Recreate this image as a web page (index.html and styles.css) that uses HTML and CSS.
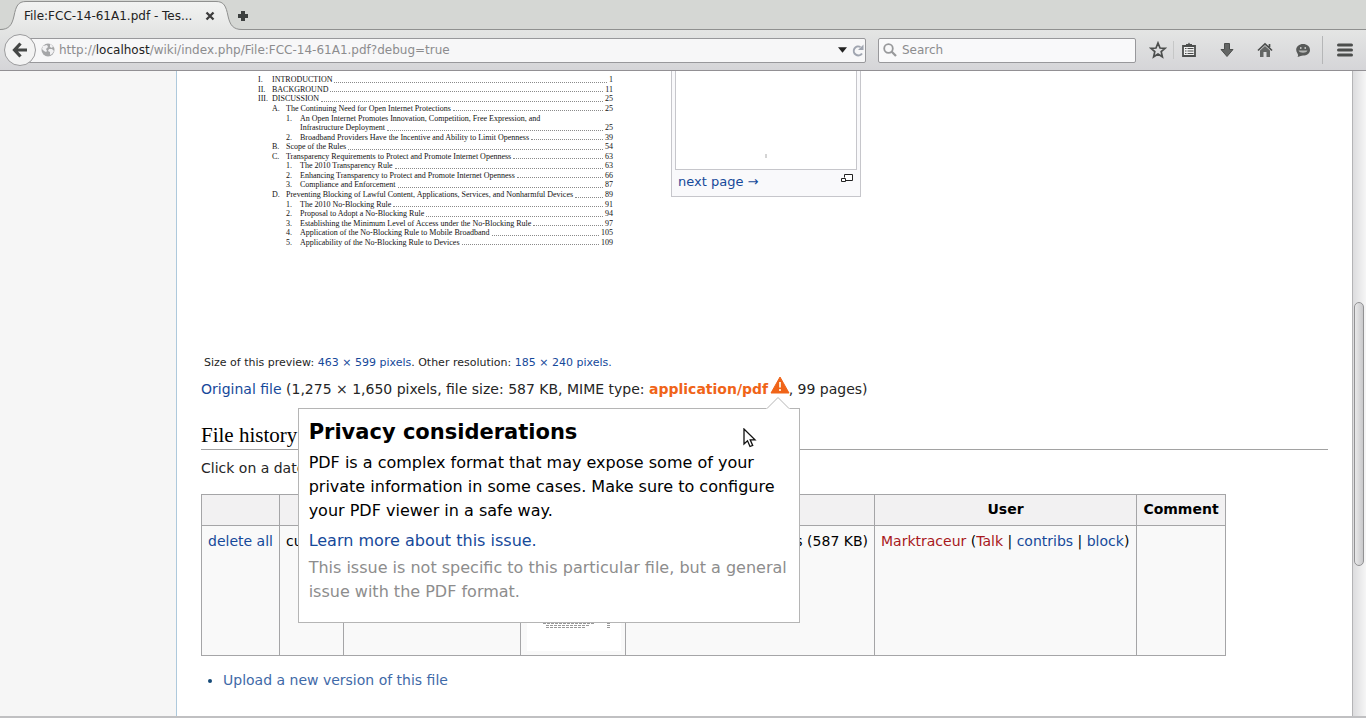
FILE: index.html
```html
<!DOCTYPE html>
<html lang="en">
<head>
<meta charset="utf-8">
<title>File:FCC-14-61A1.pdf</title>
<link rel="stylesheet" href="styles.css">
</head>
<body>
<div class="browser">
  <div class="tabstrip">
    <div class="tab">
      <svg class="tab-shape" viewBox="0 0 242 30" width="242" height="30" aria-hidden="true">
        <defs><linearGradient id="tabfill" x1="0" y1="0" x2="0" y2="1"><stop offset="0" stop-color="#f2f3f2"/><stop offset="1" stop-color="#e5e6e5"/></linearGradient></defs>
        <path d="M0 30V29.500C9 29.500 12 25 14 16C16 6 18 1.500 26 1.500H216C224 1.500 226 6 228 16C230 25 233 29.500 242 29.500V30Z" fill="url(#tabfill)"/>
        <path d="M0 29.500C9 29.500 12 25 14 16C16 6 18 1.500 26 1.500H216C224 1.500 226 6 228 16C230 25 233 29.500 242 29.500" fill="none" stroke="#8f908f"/>
      </svg>
      <span class="tab-title">File:FCC-14-61A1.pdf - Tes...</span>
      <button class="icon-btn tab-close" aria-label="Close tab"><svg width="10" height="10" viewBox="0 0 10 10"><path d="M1.500 1.500L8.500 8.500M8.500 1.500L1.500 8.500" stroke="#3c3c3c" stroke-width="2.300"/></svg></button>
    </div>
    <button class="icon-btn new-tab" aria-label="New tab"><svg width="12" height="12" viewBox="0 0 12 12"><path d="M4 1H8V4H11V8H8V11H4V8H1V4H4Z" fill="#3d403f"/></svg></button>
  </div>
  <div class="toolbar">
    <button class="back" aria-label="Back"><svg width="16" height="16" viewBox="0 0 16 16"><path d="M8.500 1.500L2.500 8L8.500 14.500M3 8H15" fill="none" stroke="#454746" stroke-width="3.200"/></svg></button>
    <div class="urlbar">
      <svg width="14" height="14" viewBox="0 0 14 14"><circle cx="7" cy="7" r="6.500" fill="#a5a6a8"/><path d="M2 3L6 2L7 4L5 6L6 8L5 9L3 8L1 6ZM9 1L12 3L11 5L9 4ZM8 6L11 6L13 8L11 11L9 12L9 9L7 8Z" fill="#f1f1f3"/></svg>
      <span class="url">http://<b>localhost</b>/wiki/index.php/File:FCC-14-61A1.pdf?debug=true</span>
      <svg width="9" height="6" viewBox="0 0 10 6"><path d="M0 0H10L5 6Z" fill="#222"/></svg>
      <button class="icon-btn" aria-label="Reload"><svg width="12" height="13" viewBox="0 0 12 13"><path d="M8.500 3A4.500 4.500 0 1 0 10 9.500" fill="none" stroke="#a0a5b0" stroke-width="2"/><path d="M6 6H11.500V.5Z" fill="#a0a5b0"/></svg></button>
    </div>
    <label class="searchbar">
      <svg width="14" height="14" viewBox="0 0 14 14"><circle cx="5.500" cy="5.500" r="4.300" fill="none" stroke="#98999b" stroke-width="1.800"/><path d="M8.500 8.500L13 13" stroke="#98999b" stroke-width="2.300"/></svg>
      <input type="text" placeholder="Search" aria-label="Search">
    </label>
    <div class="tools">
      <button class="icon-btn" aria-label="Bookmark"><svg width="18" height="18" viewBox="0 0 18 18"><path d="M9 2L11 7L16 7.300L12.200 10.600L13.400 15.800L9 13L4.600 15.800L5.800 10.600L2 7.300L7 7Z" fill="none" stroke="#4c4e4d" stroke-width="1.700"/></svg></button>
      <span class="divider short"></span>
      <button class="icon-btn" aria-label="Bookmark list"><svg width="16" height="16" viewBox="0 0 16 16"><path d="M2 4H14V14H2Z" fill="#f0f0f0" stroke="#4c4e4d" stroke-width="1.800"/><path d="M5 4V2H7L8 .5L9 2H11V4Z" fill="#4c4e4d"/><path d="M4 6.500H5.500M6.500 6.500H12.500M4 9H5.500M6.500 9H12.500M4 11.500H5.500M6.500 11.500H12.500" stroke="#4c4e4d" stroke-width="1.200"/></svg></button>
      <button class="icon-btn" aria-label="Downloads"><svg width="16" height="16" viewBox="0 0 16 16"><path d="M5.500 1.500H10.500V7.500H14L8 14.500L2 7.500H5.500Z" fill="#646665" stroke="#4c4e4d"/></svg></button>
      <button class="icon-btn" aria-label="Home"><svg width="16" height="16" viewBox="0 0 16 16"><path d="M3 8.500L8 4L13 8.500V15H9.500V10H6.500V15H3Z" fill="#646665"/><path d="M1 8.500L8 2L15 8.500M12.500 2V5" fill="none" stroke="#4c4e4d" stroke-width="1.700"/></svg></button>
      <button class="icon-btn" aria-label="Chat"><svg width="16" height="16" viewBox="0 0 16 16"><path d="M8 2C12 2 15 4.500 15 8S12 13.500 8 13.500C6.500 13.500 5 14.500 2.500 15C3.500 13.500 3 12.500 2.500 11.500C-1 6.500 3 2 8 2Z" fill="#585a59"/><path d="M5 6H6.500M9.500 6H11" stroke="#e0e1e0" stroke-width="1.400"/><path d="M3.500 8.500H12.500C11.500 11.500 4.500 11.500 3.500 8.500Z" fill="#b4b5b4"/></svg></button>
      <span class="divider"></span>
      <button class="icon-btn" aria-label="Menu"><svg width="16" height="14" viewBox="0 0 16 14"><path d="M1.500 2H14.500M1.500 7H14.500M1.500 12H14.500" stroke="#4c4e4d" stroke-width="3" stroke-linecap="round"/></svg></button>
    </div>
  </div>
  <div class="window">
    <div class="sidebar"></div>
    <main class="content">
      <div class="preview">
        <div class="page">
          <div class="row l1"><i>I.</i><span>INTRODUCTION</span><u></u><b>1</b></div>
          <div class="row l1"><i>II.</i><span>BACKGROUND</span><u></u><b>11</b></div>
          <div class="row l1"><i>III.</i><span>DISCUSSION</span><u></u><b>25</b></div>
          <div class="row l2"><i>A.</i><span>The Continuing Need for Open Internet Protections</span><u></u><b>25</b></div>
          <div class="row l3"><i>1.</i><span>An Open Internet Promotes Innovation, Competition, Free Expression, and</span></div>
          <div class="row l3"><i></i><span>Infrastructure Deployment</span><u></u><b>25</b></div>
          <div class="row l3"><i>2.</i><span>Broadband Providers Have the Incentive and Ability to Limit Openness</span><u></u><b>39</b></div>
          <div class="row l2"><i>B.</i><span>Scope of the Rules</span><u></u><b>54</b></div>
          <div class="row l2"><i>C.</i><span>Transparency Requirements to Protect and Promote Internet Openness</span><u></u><b>63</b></div>
          <div class="row l3"><i>1.</i><span>The 2010 Transparency Rule</span><u></u><b>63</b></div>
          <div class="row l3"><i>2.</i><span>Enhancing Transparency to Protect and Promote Internet Openness</span><u></u><b>66</b></div>
          <div class="row l3"><i>3.</i><span>Compliance and Enforcement</span><u></u><b>87</b></div>
          <div class="row l2"><i>D.</i><span>Preventing Blocking of Lawful Content, Applications, Services, and Nonharmful Devices</span><u></u><b>89</b></div>
          <div class="row l3"><i>1.</i><span>The 2010 No-Blocking Rule</span><u></u><b>91</b></div>
          <div class="row l3"><i>2.</i><span>Proposal to Adopt a No-Blocking Rule</span><u></u><b>94</b></div>
          <div class="row l3"><i>3.</i><span>Establishing the Minimum Level of Access under the No-Blocking Rule</span><u></u><b>97</b></div>
          <div class="row l3"><i>4.</i><span>Application of the No-Blocking Rule to Mobile Broadband</span><u></u><b>105</b></div>
          <div class="row l3"><i>5.</i><span>Applicability of the No-Blocking Rule to Devices</span><u></u><b>109</b></div>
        </div>
        <div class="thumb">
          <div class="thumb-image"><svg width="2" height="4" viewBox="0 0 2 4"><path d="M1 0V4" stroke="#aaa"/></svg></div>
          <div class="thumb-caption"><a href="#next">next page →</a><svg width="12" height="9" viewBox="0 0 12 9"><path d="M3.500 3.500V.5H11.500V6.500H5M.5 4.500H4.500V7.500H.5Z" fill="#fff" stroke="#222"/></svg></div>
        </div>
      </div>
      <p class="sizes">Size of this preview: <a href="#463">463 × 599 pixels</a>. Other resolution: <a href="#185">185 × 240 pixels.</a></p>
      <p class="original"><a href="#file">Original file</a> (1,275 × 1,650 pixels, file size: 587 KB, MIME type: <strong>application/pdf</strong> <span class="warn"><svg width="20" height="18" viewBox="0 0 20 18"><path d="M10 1L19 17H1Z" fill="#f06418" stroke="#f06418" stroke-linejoin="round"/><path d="M10 6V11.500M10 13V15" stroke="#fde3c8" stroke-width="2"/></svg>
        <span class="popup" role="dialog" aria-labelledby="pt">
          <svg class="caret" width="24" height="12" viewBox="0 0 24 12"><path d="M0 11.500H1L12 .5L23 11.500H24V12H0Z" fill="#fff"/><path d="M1 11.500L12 .5L23 11.500" fill="none" stroke="#b5b5b5"/></svg>
          <strong class="popup-title" id="pt">Privacy considerations</strong>
          <span class="popup-text">PDF is a complex format that may expose some of your private information in some cases. Make sure to configure your PDF viewer in a safe way.</span>
          <a class="popup-link" href="#learn">Learn more about this issue.</a>
          <span class="popup-note">This issue is not specific to this particular file, but a general issue with the PDF format.</span>
          <svg class="pointer" width="14" height="20" viewBox="0 0 14 20"><path d="M1 1V16L4.500 12.800L7 18.500L9.700 17.400L7.200 11.800H12Z" fill="#fff" stroke="#111" stroke-width="1.300"/></svg>
        </span></span>, 99 pages)</p>
      <h2>File history</h2>
      <p class="hint">Click on a date/time to view the file as it appeared at that time.</p>
      <table class="history">
        <colgroup><col class="c-del"><col class="c-cur"><col class="c-date"><col class="c-thumb"><col class="c-dim"><col class="c-user"><col class="c-com"></colgroup>
        <thead><tr><th></th><th></th><th></th><th></th><th></th><th>User</th><th>Comment</th></tr></thead>
        <tbody><tr>
          <td><a href="#del">delete all</a></td><td>cur</td><td></td>
          <td class="mini"><svg width="94" height="120" viewBox="0 0 94 120"><path d="M0 0H94V120H0Z" fill="#fff"/><path d="M16 92.500H68M19 94.500H62M19 96.500H58" stroke="#999" stroke-dasharray="3 1"/><path d="M80 92.500H83M80 94.500H83M80 96.500H83" stroke="#999"/></svg></td>
          <td class="dim">99 pages (587 KB)</td>
          <td><a class="red" href="#user">Marktraceur</a> (<a class="red" href="#talk">Talk</a> | <a href="#contribs">contribs</a> | <a href="#block">block</a>)</td><td></td>
        </tr></tbody>
      </table>
      <ul class="upload"><li><a href="#upload">Upload a new version of this file</a></li></ul>
      <h2>File usage</h2>
    </main>
    <div class="scroll"><div class="scroll-thumb"></div></div>
  </div>
</div>
</body>
</html>
```
FILE: styles.css
```css
* { box-sizing: border-box; }
body { margin: 0; font-family: "DejaVu Sans", sans-serif; font-size: 14px; color: #252525; }
a { color: #16499a; text-decoration: none; }
svg { display: block; flex: none; }
.browser { display: flex; flex-direction: column; height: 100vh; overflow: hidden; border-bottom: 2px solid #c0c0c2; }
.icon-btn { display: flex; align-items: center; justify-content: center; padding: 0; border: 0; background: none; }

.tabstrip { display: flex; align-items: center; height: 30px; flex: none; background: #d5d7d4; border-bottom: 1px solid #8f908f; font-size: 12px; }
.tab { position: relative; display: flex; align-items: center; justify-content: space-between; width: 236px; height: 30px; padding: 2px 21px 0 24px; }
.tab-shape { position: absolute; left: 0; top: 0; }
.tab-title, .tab-close { position: relative; }
.tab-title { white-space: nowrap; color: #222; }
.new-tab { margin: 2px 0 0 1px; }

.toolbar { display: flex; align-items: center; height: 41px; flex: none; padding: 0 13px 0 4px; background: linear-gradient(#e4e5e4, #d5d5d8); border-bottom: 1px solid #929094; font-size: 12px; }
.back { position: relative; flex: none; display: flex; align-items: center; justify-content: center; width: 32px; height: 32px; padding: 0; border: 1px solid #9b9b9d; border-radius: 50%; background: #f3f3f3; }
.urlbar { display: flex; align-items: center; flex: 1; gap: 4px; height: 25px; margin-left: -14px; padding: 0 1px 0 18px; background: #f7f7f8; border: 1px solid #98989b; border-radius: 2px; }
.urlbar .icon-btn { margin-left: 1px; }
.url { flex: 1; color: #8c8c8e; white-space: nowrap; }
.url b { font-weight: normal; color: #222; }
.searchbar { display: flex; align-items: center; gap: 5px; width: 258px; height: 25px; margin-left: 12px; padding: 0 4px; background: #f9f9fa; border: 1px solid #98989b; border-radius: 2px; }
.searchbar input { flex: 1; min-width: 0; border: 0; padding: 0; background: none; font: inherit; outline: 0; }
.searchbar input::placeholder { color: #8c8c8e; opacity: 1; }
.tools { display: flex; align-items: center; margin-left: 13px; gap: 22px; }
.tools .divider { width: 1px; height: 28px; background: #b5b6b7; margin: 0 -10px 0 -11px; }
.tools .divider + .icon-btn { margin-left: 2px; }
.tools .divider.short { height: 18px; margin: 0 -15px 0 -16px; background: #c6c7c7; }
.tools .divider.short + .icon-btn { margin-left: 0; }

.window { display: flex; flex: 1; min-height: 0; overflow: hidden; background: #fff; }
.sidebar { width: 177px; flex: none; background: #f6f6f6; border-right: 1px solid #aec9dc; }
.content { flex: 1; min-width: 0; padding: 0 24px; }
.scroll { width: 14px; flex: none; padding: 231px 2px 0 1px; border-left: 1px solid #b4b4b6; background: linear-gradient(90deg, #dcdcde, #f6f6f6); }
.scroll-thumb { height: 264px; border: 1px solid #929294; border-radius: 5px; background: linear-gradient(90deg, #e8e8e9, #c9c9cb); }

.preview { display: flex; align-items: flex-start; height: 284px; }
.page { display: flex; flex-direction: column; justify-content: space-between; width: 355px; height: 172px; margin: 4px 58px 0 57px; font: 8px "Liberation Serif", serif; color: #111; }
.row { display: flex; align-items: center; height: 10px; white-space: nowrap; }
.row i { flex: none; width: 14px; font-style: normal; }
.row u { flex: 1; height: 6px; margin: 0 2px; border-bottom: 1px dotted #8a8a8a; }
.row b { font-weight: normal; }
.l2 { padding-left: 14px; }
.l3 { padding-left: 28px; }
.thumb { width: 190px; padding: 0 3px; border: 1px solid #c6c6cb; border-top: 0; background: #f9f9fb; font-size: 13px; }
.thumb-image { display: flex; align-items: flex-end; justify-content: center; height: 99px; padding-bottom: 11px; border: 1px solid #c6c6cb; border-top: 0; background: #fff; }
.thumb-caption { display: flex; justify-content: space-between; height: 26px; padding: 4px 4px 0 3px; }

.sizes { margin: 0; padding-left: 3px; font-size: 11px; line-height: 16px; }
.original { margin: 5px 0 22px; line-height: 20px; white-space: nowrap; }
.original strong { color: #f06418; }
.warn { position: relative; display: inline-block; margin: 0 -1px 0 -3px; }
.popup { position: absolute; z-index: 2; top: 32px; right: -10px; width: 502px; height: 215px; padding: 10px; border: 1px solid #b5b5b5; background: #fff; color: #000; font-size: 16px; line-height: 24px; white-space: normal; }
.caret { position: absolute; top: -12px; right: 9px; }
.pointer { position: absolute; top: 19px; right: 42px; }
.popup > strong { display: block; margin-bottom: 6px; color: #000; font-size: 21px; line-height: 26px; }
.popup-text, .popup-link, .popup-note { display: block; margin-bottom: 6px; }
.popup-link { margin-bottom: 3px; }
.popup-note { color: #8d8d8d; }
h2 { margin: 21px 0 0; height: 29px; border-bottom: 1px solid #a2a2a2; font: 21px/28px "Liberation Serif", serif; color: #000; }
.hint { margin: 8px 0 16px; line-height: 20px; }
.history { table-layout: fixed; width: 1024px; border-collapse: collapse; color: #000; background: #f9f9f9; white-space: nowrap; }
.history th, .history td { height: 31px; padding: 5px 6px; border: 1px solid #a5a5a7; line-height: 20px; text-align: left; vertical-align: top; }
.history th { background: #f2f1f2; text-align: center; padding: 4px 6px; }
.history .mini { padding: 5px 6px 4px; }
.history td.dim { text-align: right; }
.history a.red { color: #a81820; }
.c-del { width: 78px; } .c-cur { width: 64px; } .c-date { width: 177px; } .c-thumb { width: 105px; } .c-dim { width: 249px; } .c-user { width: 262px; } .c-com { width: 89px; }
.upload { margin: 14px 0 0; padding-left: 22px; line-height: 20px; color: #164a78; }
.upload a { color: #3f6aa8; }
```
